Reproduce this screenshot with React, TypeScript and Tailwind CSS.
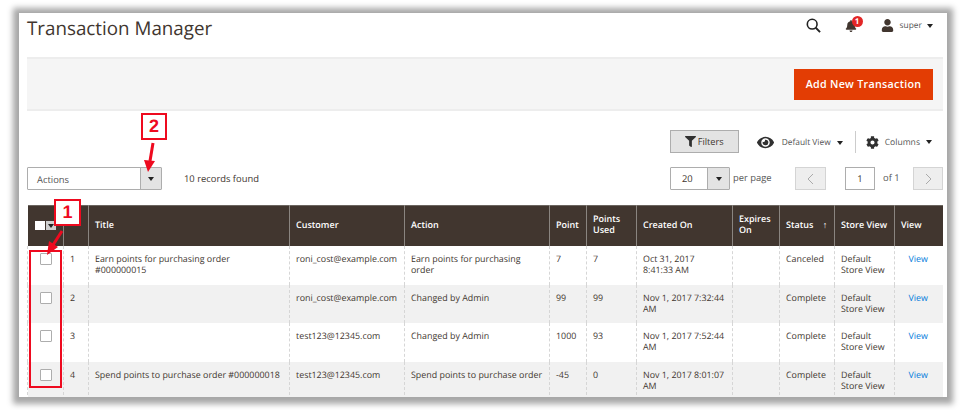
import React from "react";
import { FaBell, FaUser, FaEye, FaCog, FaFilter } from "react-icons/fa";

const rows = [
  { id: "1", title: "Earn points for purchasing order #000000015", customer: "roni_cost@example.com", action: "Earn points for purchasing order", point: "7", used: "7", created: "Oct 31, 2017 8:41:33 AM", status: "Canceled", h: "h-[39px]" },
  { id: "2", title: "", customer: "roni_cost@example.com", action: "Changed by Admin", point: "99", used: "99", created: "Nov 1, 2017 7:32:44 AM", status: "Complete", h: "h-[38px]" },
  { id: "3", title: "", customer: "test123@12345.com", action: "Changed by Admin", point: "1000", used: "93", created: "Nov 1, 2017 7:52:44 AM", status: "Complete", h: "h-[39px]" },
  { id: "4", title: "Spend points to purchase order #000000018", customer: "test123@12345.com", action: "Spend points to purchase order", point: "-45", used: "0", created: "Nov 1, 2017 8:01:07 AM", status: "Complete", h: "h-[38px]" },
];

const Caret = ({ className = "" }: { className?: string }) => (
  <span className={"inline-block w-0 h-0 border-l-[3px] border-r-[3px] border-t-[4px] border-l-transparent border-r-transparent border-t-[#222] " + className} />
);

const th = "border-l border-[#8a8580] pl-[6px] pr-[7px] pb-[3px] align-middle text-left font-semibold text-[9px] text-white leading-[11.5px]";
const td = "border-l border-dashed border-[#d6d6d6] pl-[6px] pr-[7px] pt-[7px] align-top leading-[11.5px] text-[8.9px] text-[#41362f]";
const tdCreated = "border-l border-dashed border-[#d6d6d6] pl-[6px] pt-[7px] align-top leading-[11.5px] text-[8.9px] text-[#41362f]";

export default function App() {
  return (
    <div className="relative w-[966px] h-[410px] bg-white overflow-hidden pt-[13px] pl-[19px] font-['Open_Sans',sans-serif] [text-rendering:geometricPrecision]">
      <div className="w-[928px] h-[384px] bg-white overflow-hidden pl-[8px] pr-[4px] shadow-[0_1px_6px_6px_rgba(0,0,0,0.35)] text-[9.4px] text-[#41362f]">
        <header className="h-[44px] flex items-start justify-between">
          <h1 className="text-[18.8px] leading-[30px] text-[#41362f] font-normal">Transaction Manager</h1>
          <div className="flex items-center pt-[5px] pr-[10px]">
            <svg width="15" height="15" viewBox="0 0 16 16" className="mr-[24px]" fill="none" stroke="#222" strokeWidth="1.7">
              <circle cx="6.6" cy="6.6" r="5.2" />
              <path d="M10.4 10.4 15 15" strokeWidth="2" />
            </svg>
            <span className="relative mr-[24px] w-[12px]">
              <FaBell className="text-[#41362f] text-[12px]" />
              <span className="absolute -top-[4px] left-[7px] w-[11px] h-[11px] rounded-full bg-[#e22626] text-white text-[8px] font-bold leading-[11px] text-center">1</span>
            </span>
            <FaUser className="text-[#41362f] text-[13px] mr-[6px] -mt-[1px]" />
            <span className="text-[#555] text-[8.4px] mr-[5px] mt-[1px]">super</span>
            <Caret />
          </div>
        </header>

        <div className="h-[54px] bg-[#f5f5f5] border-y-2 border-[#ededed] flex items-center justify-end pr-[10px]">
          <button className="w-[139px] h-[31px] bg-[#e33d04] text-white text-[10.7px] font-semibold tracking-[0.3px]">Add New Transaction</button>
        </div>

        <div className="h-[94px] pt-[19px]">
          <div className="flex items-center justify-end h-[23px] mb-[14px] pr-[11px]">
            <button className="w-[69px] h-[23px] bg-[#e3e3e3] border border-[#adadad] flex items-center justify-center gap-[2px] text-[9.2px] text-[#41362f]">
              <FaFilter className="text-[11px] text-[#303030]" /> Filters
            </button>
            <FaEye className="ml-[18px] mt-[2px] text-[17px] text-[#303030]" />
            <span className="ml-[8px] mt-[4px] text-[8.4px] text-[#555]">Default View</span>
            <Caret className="ml-[6px] mt-[2px]" />
            <span className="ml-[12px] h-[22px] border-l border-[#ccc]" />
            <FaCog className="ml-[10px] mt-[1px] text-[13px] text-[#303030]" />
            <span className="ml-[6px] mt-[1px] text-[8.6px] text-[#555]">Columns</span>
            <Caret className="ml-[6px] mt-[1px]" />
          </div>
          <div className="flex items-center justify-between">
            <div className="flex items-center">
              <div className="w-[135px] h-[23px] flex border border-[#adadad] rounded-[1px]">
                <span className="flex-1 pl-[9px] leading-[23px] text-[#555]">Actions</span>
                <span className="w-[21px] bg-[#e3e3e3] border-l border-[#adadad] flex items-center justify-center"><Caret /></span>
              </div>
              <span className="ml-[22px] mt-[2px] text-[#41362f]">10 records found</span>
            </div>
            <div className="flex items-center">
              <div className="w-[60px] h-[23px] flex border border-[#adadad] rounded-[1px]">
                <span className="flex-1 pl-[11px] leading-[22px]">20</span>
                <span className="w-[22px] bg-[#e3e3e3] border-l border-[#adadad] flex items-center justify-center"><Caret /></span>
              </div>
              <span className="ml-[3px] w-[62px] text-[#555]">per page</span>
              <span className="w-[31px] h-[23px] bg-[#eeeeee] border border-[#d4d4d4] flex items-center justify-center">
                <svg width="7" height="12" viewBox="0 0 7 12" fill="none" stroke="#aaa" strokeWidth="1"><path d="M6 1 1 6l5 5" /></svg>
              </span>
              <span className="ml-[19px] w-[30px] h-[23px] border border-[#adadad] text-center leading-[22px]">1</span>
              <span className="ml-[8px] w-[22px] text-[#555]">of 1</span>
              <span className="ml-[8px] w-[30px] h-[23px] bg-[#eeeeee] border border-[#d4d4d4] flex items-center justify-center">
                <svg width="7" height="12" viewBox="0 0 7 12" fill="none" stroke="#aaa" strokeWidth="1"><path d="m1 1 5 5-5 5" /></svg>
              </span>
            </div>
          </div>
        </div>

        <table className="w-[915px] table-fixed border-collapse">
          <colgroup>
            <col className="w-[36px]" />
            <col className="w-[25px]" />
            <col className="w-[201px]" />
            <col className="w-[115px]" />
            <col className="w-[145px]" />
            <col className="w-[37px]" />
            <col className="w-[50px]" />
            <col className="w-[96px]" />
            <col className="w-[47px]" />
            <col className="w-[55px]" />
            <col className="w-[60px]" />
            <col className="w-[48px]" />
          </colgroup>
          <thead>
            <tr className="h-[40px] bg-[#41362f] border-t border-[#6b655f]">
              <th className="align-middle pl-[7px]">
                <span className="flex w-[21px] h-[9px]">
                  <span className="w-[10px] h-[9px] bg-white" />
                  <span className="w-[10px] h-[9px] ml-[1px] bg-[#cfcfcf] flex items-center justify-center"><Caret /></span>
                </span>
              </th>
              <th className={th}></th>
              <th className={th}>Title</th>
              <th className={th}>Customer</th>
              <th className={th}>Action</th>
              <th className={th}>Point</th>
              <th className={th}>Points Used</th>
              <th className={th}>Created On</th>
              <th className={th}>Expires On</th>
              <th className={th + " whitespace-nowrap"}>Status <span className="ml-[7px] font-normal">↑</span></th>
              <th className={th + " whitespace-nowrap"}>Store View</th>
              <th className={th}>View</th>
            </tr>
          </thead>
          <tbody>
            {rows.map((r, i) => (
              <tr key={r.id} className={(i % 2 ? "bg-[#f1f1f1] " : "bg-white ") + r.h}>
                <td className="align-top pt-[7px] pl-[12px] border-l border-dashed border-[#d6d6d6]">
                  <span className="block w-[12px] h-[12px] bg-white border border-[#adadad] rounded-[1px]" />
                </td>
                <td className={td}>{r.id}</td>
                <td className={td}>{r.title}</td>
                <td className={td}>{r.customer}</td>
                <td className={td + (r.id === "4" ? " whitespace-nowrap" : "")}>{r.action}</td>
                <td className={td}>{r.point}</td>
                <td className={td}>{r.used}</td>
                <td className={tdCreated + (r.id === "1" ? " pr-[20px]" : " pr-[3px]")}>{r.created}</td>
                <td className={td}></td>
                <td className={td}>{r.status}</td>
                <td className={td}>Default Store View</td>
                <td className={td + " text-center"}><span className="text-[#007bdb]">View</span></td>
              </tr>
            ))}
          </tbody>
        </table>
      </div>

      {/* annotations */}
      <span className="absolute left-[29px] top-[250px] w-[33px] h-[138px] border-[2px] border-[#ee0a1f]" />
      <span className="absolute left-[54px] top-[199px] w-[27px] h-[27px] bg-white border-[2px] border-[#ee0a1f] text-[#ee0a1f] text-[18px] font-bold text-center leading-[23px] font-['Liberation_Sans',sans-serif]">1</span>
      <span className="absolute left-[141px] top-[113px] w-[26px] h-[27px] bg-white border-[2px] border-[#ee0a1f] text-[#ee0a1f] text-[18px] font-bold text-center leading-[23px] font-['Liberation_Sans',sans-serif]">2</span>
      <svg className="absolute left-0 top-0 pointer-events-none" width="966" height="410" viewBox="0 0 966 410">
        <path d="M62 231 53 245" stroke="#ee0a1f" strokeWidth="3" />
        <path d="M47 255 49 241 58 247Z" fill="#ee0a1f" />
        <path d="M153 143 150 161" stroke="#ee0a1f" strokeWidth="3" />
        <path d="M148 172 144 160 155 161Z" fill="#ee0a1f" />
      </svg>
    </div>
  );
}
